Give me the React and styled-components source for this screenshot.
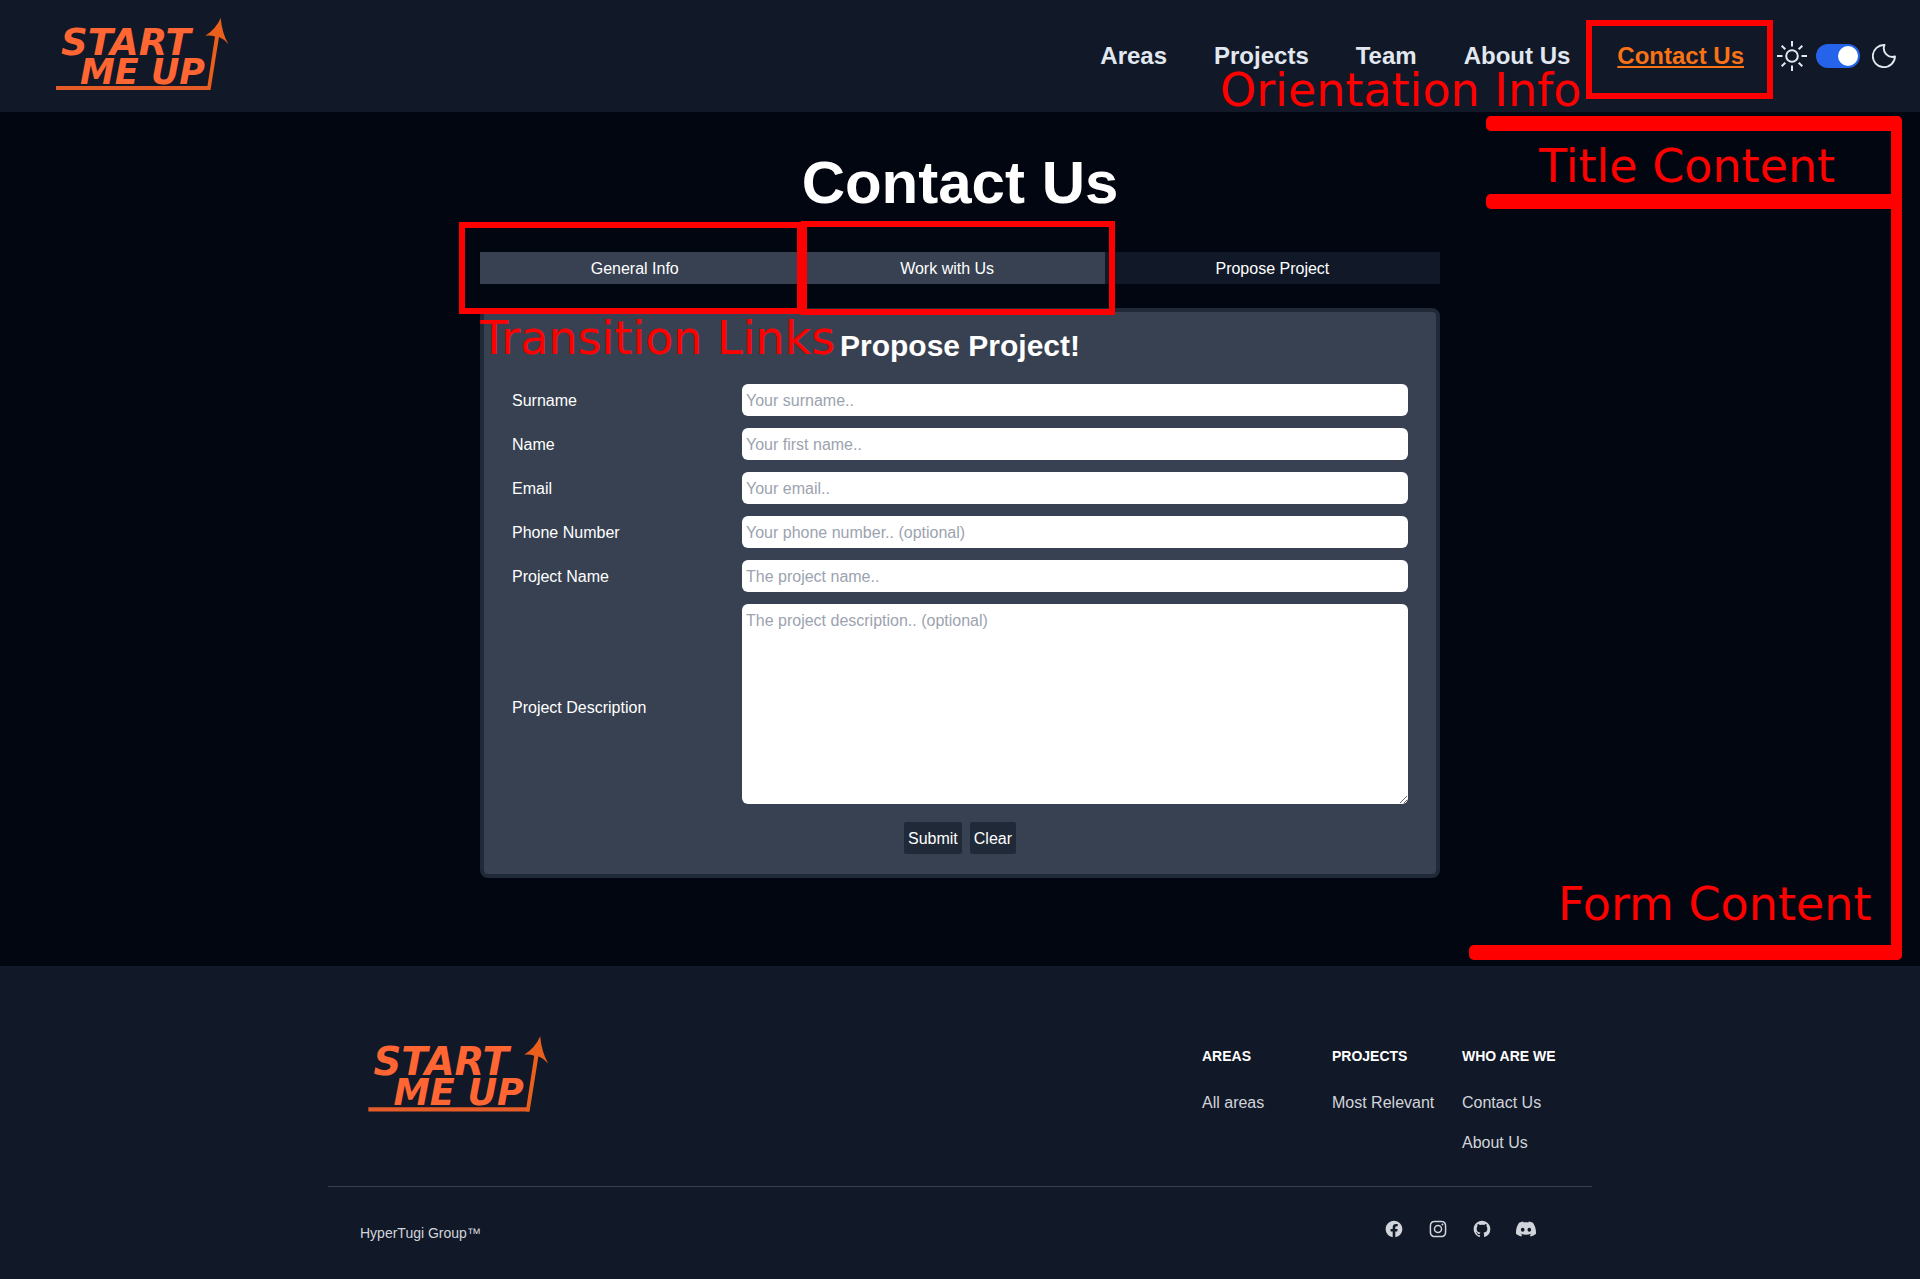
import React, { useState } from "react";
import styled, { createGlobalStyle } from "styled-components";
import { SiDiscord } from "react-icons/si";

const GlobalStyle = createGlobalStyle`
  *, *::before, *::after { box-sizing: border-box; }
  body {
    margin: 0;
    background: #020610;
    color: #ffffff;
    font-family: "Liberation Sans", Arial, sans-serif;
    font-size: 16px;
    line-height: 24px;
  }
  h1, h2, h3, p, ul { margin: 0; padding: 0; }
  ul { list-style: none; }
  a { color: inherit; text-decoration: none; }
  button, input, textarea { font: inherit; }
`;

const Page = styled.div`
  position: relative;
  min-height: 100vh;
  display: flex;
  flex-direction: column;
`;

const Header = styled.header`
  display: flex;
  align-items: center;
  justify-content: space-between;
  height: 112px;
  padding: 0 24px 0 48px;
  background: #111827;
`;

const HeaderRight = styled.div`
  display: flex;
  align-items: center;
  gap: 32px;
`;

const Nav = styled.nav`
  display: flex;
  gap: 47px;
`;

const NavLink = styled.a`
  color: ${(p) => (p.$active ? "#f97316" : "#e2e8f0")};
  font-size: 24px;
  font-weight: 700;
  line-height: 32px;
  text-decoration: ${(p) => (p.$active ? "underline" : "none")};
  text-decoration-thickness: 2px;
  text-underline-offset: 2px;
  text-decoration-skip-ink: none;
`;

const ThemeSwitch = styled.label`
  display: flex;
  align-items: center;
  color: #e2e8f0;
  cursor: pointer;

  svg { display: block; }
`;

const SwitchInput = styled.input`
  appearance: none;
  width: 44px;
  height: 24px;
  margin: 0 12px 0 8px;
  padding: 2px;
  border-radius: 12px;
  background: #2563eb;
  display: flex;
  justify-content: flex-start;
  cursor: pointer;

  &:checked { justify-content: flex-end; }

  &::before {
    content: "";
    width: 20px;
    height: 20px;
    border-radius: 50%;
    background: #ffffff;
  }
`;

const LogoLink = styled.a`
  display: block;

  svg { display: block; }
`;

const LogoText = styled.text`
  font-family: "DejaVu Sans", sans-serif;
  font-size: ${(p) => p.$size}px;
  font-weight: 700;
  font-style: italic;
  fill: #ff6633;
`;

const Main = styled.main`
  flex: 1;
  padding: 41px 0 88px;
`;

const Content = styled.div`
  width: 50%;
  min-width: 640px;
  margin: 0 auto;
`;

const Title = styled.h1`
  margin-bottom: 39px;
  font-size: 60px;
  line-height: 60px;
  text-align: center;
`;

const Tabs = styled.nav`
  display: flex;
  margin-bottom: 24px;
`;

const Tab = styled.a`
  flex: 1 1 auto;
  padding: 5px 0 3px;
  background: ${(p) => (p.$current ? "#111827" : "#374151")};
  text-align: center;
`;

const Form = styled.form`
  padding: 16px 28px 20px;
  border: 4px solid #1f2937;
  border-radius: 8px;
  background: #374151;
`;

const FormTitle = styled.h2`
  margin-bottom: 20px;
  font-size: 30px;
  line-height: 36px;
  text-align: center;
`;

const Field = styled.div`
  display: grid;
  grid-template-columns: 1fr 3fr;
  align-items: center;
  gap: 8px;
  margin-bottom: 12px;
`;

const FieldLabel = styled.label`
  padding-top: ${(p) => (p.$tall ? 8 : 2)}px;
`;

const TextInput = styled.input`
  display: block;
  width: 100%;
  height: 32px;
  padding: 5px 4px 3px;
  border: 0;
  border-radius: 6px;
  background: #ffffff;
  color: #111827;

  &::placeholder { color: #9ca3af; opacity: 1; }
`;

const TextArea = styled(TextInput)`
  height: 200px;
  resize: vertical;
`;

const Actions = styled.div`
  display: flex;
  justify-content: center;
  gap: 8px;
  padding-top: 6px;
`;

const Button = styled.button`
  padding: 5px 4px 3px;
  border: 0;
  border-radius: 2px;
  background: #1f2937;
  color: #ffffff;
  cursor: pointer;
`;

const Footer = styled.footer`
  background: #111827;
`;

const FooterInner = styled.div`
  max-width: 1264px;
  margin: 0 auto;
  padding-top: 63px;
`;

const FooterTop = styled.div`
  display: flex;
  justify-content: space-between;
  align-items: flex-start;
  padding: 0 32px 31px;
  border-bottom: 1px solid #374151;
`;

const FooterColumns = styled.div`
  display: grid;
  grid-template-columns: repeat(3, 98px);
  gap: 32px;
  padding-top: 17px;
`;

const ColumnTitle = styled.h3`
  margin-bottom: 25px;
  font-size: 14px;
  line-height: 20px;
  text-transform: uppercase;
  white-space: nowrap;
`;

const ColumnLinks = styled.ul`
  display: grid;
  gap: 16px;
  color: #d1d5db;
  white-space: nowrap;
`;

const FooterBottom = styled.div`
  display: flex;
  justify-content: space-between;
  align-items: flex-start;
  padding: 32px;
`;

const Copyright = styled.p`
  color: #d1d5db;
  font-size: 14px;
  line-height: 28px;
`;

const Socials = styled.div`
  display: flex;
  gap: 24px;
  padding-right: 24px;
  color: #d1d5db;

  svg { display: block; width: 20px; height: 20px; }
`;

const Note = styled.span`
  position: absolute;
  top: ${(p) => p.$top}px;
  left: ${(p) => p.$left}px;
  color: #ff0000;
  font-family: "DejaVu Sans", sans-serif;
  font-size: 46px;
  line-height: 44px;
  white-space: nowrap;
  pointer-events: none;
`;

const Frame = styled.div`
  position: absolute;
  top: ${(p) => p.$top}px;
  left: ${(p) => p.$left}px;
  width: ${(p) => p.$width}px;
  height: ${(p) => p.$height}px;
  border: 6px solid #ff0000;
  pointer-events: none;
`;

const Stroke = styled.div`
  position: absolute;
  top: ${(p) => p.$top}px;
  left: ${(p) => p.$left}px;
  width: ${(p) => p.$width}px;
  height: ${(p) => p.$height}px;
  border-radius: 5px;
  background: #ff0000;
  pointer-events: none;
`;

function Logo({ width, height }) {
  return (
    <LogoLink href="#home" aria-label="Start Me Up home">
      <svg width={width} height={height} viewBox="0 0 184 90">
        <LogoText $size={37} x="13" y="44">START</LogoText>
        <LogoText $size={35} x="32" y="73">ME UP</LogoText>
        <path d="M8 75H160L162.500 79H8Z" fill="#e65c28" />
        <path
          d="M159.300 76L167 25.500Q162 24 157.300 24.700Q168 18 172.700 7Q174 22 180.300 33Q176 28 171 26L162.500 79H159Z"
          fill="#ea5f1c"
        />
      </svg>
    </LogoLink>
  );
}

function SunIcon() {
  return (
    <svg width="32" height="32" viewBox="0 0 32 32" fill="none" stroke="currentColor" strokeWidth="2">
      <circle cx="16" cy="16" r="5.800" />
      <path d="M16 1v5.500M16 25.500V31M1 16h5.500M25.500 16H31M5.700 5.700l3.600 3.600M22.700 22.700l3.600 3.600M5.700 26.300l3.600-3.600M22.700 9.300l3.600-3.600" />
    </svg>
  );
}

function MoonIcon() {
  return (
    <svg width="24" height="24" viewBox="0 0 24 24" fill="none" stroke="currentColor" strokeWidth="1.9" strokeLinejoin="round">
      <path d="M12.500 1A11.100 11.100 0 1 0 23 12.500A8.600 8.600 0 0 1 12.500 1Z" />
    </svg>
  );
}

function FacebookIcon() {
  return (
    <svg viewBox="0 0 24 24" fill="currentColor">
      <path d="M22 12c0-5.523-4.477-10-10-10S2 6.477 2 12c0 4.991 3.657 9.128 8.438 9.878v-6.987h-2.540V12h2.540V9.797c0-2.506 1.492-3.890 3.777-3.890 1.094 0 2.238.195 2.238.195v2.460h-1.260c-1.243 0-1.630.771-1.630 1.562V12h2.773l-.443 2.890h-2.330v6.988C18.343 21.128 22 16.991 22 12z" />
    </svg>
  );
}

function InstagramIcon() {
  return (
    <svg viewBox="0 0 24 24" fill="currentColor" fillRule="evenodd">
      <path d="M12.315 2c2.430 0 2.784.013 3.808.060 1.064.049 1.791.218 2.427.465a4.902 4.902 0 011.772 1.153 4.902 4.902 0 011.153 1.772c.247.636.416 1.363.465 2.427.048 1.067.060 1.407.060 4.123v.080c0 2.643-.012 2.987-.060 4.043-.049 1.064-.218 1.791-.465 2.427a4.902 4.902 0 01-1.153 1.772 4.902 4.902 0 01-1.772 1.153c-.636.247-1.363.416-2.427.465-1.067.048-1.407.060-4.123.060h-.080c-2.643 0-2.987-.012-4.043-.060-1.064-.049-1.791-.218-2.427-.465a4.902 4.902 0 01-1.772-1.153 4.902 4.902 0 01-1.153-1.772c-.247-.636-.416-1.363-.465-2.427-.047-1.024-.060-1.379-.060-3.808v-.630c0-2.430.013-2.784.060-3.808.049-1.064.218-1.791.465-2.427a4.902 4.902 0 011.153-1.772A4.902 4.902 0 015.450 2.525c.636-.247 1.363-.416 2.427-.465C8.901 2.013 9.256 2 11.685 2h.630zm-.081 1.802h-.468c-2.456 0-2.784.011-3.807.058-.975.045-1.504.207-1.857.344-.467.182-.8.398-1.150.748-.350.350-.566.683-.748 1.150-.137.353-.300.882-.344 1.857-.047 1.023-.058 1.351-.058 3.807v.468c0 2.456.011 2.784.058 3.807.045.975.207 1.504.344 1.857.182.466.399.800.748 1.150.350.350.683.566 1.150.748.353.137.882.300 1.857.344 1.054.048 1.370.058 4.041.058h.080c2.597 0 2.917-.010 3.960-.058.976-.045 1.505-.207 1.858-.344.466-.182.800-.398 1.150-.748.350-.350.566-.683.748-1.150.137-.353.300-.882.344-1.857.048-1.055.058-1.370.058-4.041v-.080c0-2.597-.010-2.917-.058-3.960-.045-.976-.207-1.505-.344-1.858a3.097 3.097 0 00-.748-1.150 3.098 3.098 0 00-1.150-.748c-.353-.137-.882-.300-1.857-.344-1.023-.047-1.351-.058-3.807-.058zM12 6.865a5.135 5.135 0 110 10.270 5.135 5.135 0 010-10.270zm0 1.802a3.333 3.333 0 100 6.666 3.333 3.333 0 000-6.666zm5.338-3.205a1.200 1.200 0 110 2.400 1.200 1.200 0 010-2.400z" />
    </svg>
  );
}

function GithubIcon() {
  return (
    <svg viewBox="0 0 24 24" fill="currentColor" fillRule="evenodd">
      <path d="M12 2C6.477 2 2 6.484 2 12.017c0 4.425 2.865 8.180 6.839 9.504.500.092.682-.217.682-.483 0-.237-.008-.868-.013-1.703-2.782.605-3.369-1.343-3.369-1.343-.454-1.158-1.110-1.466-1.110-1.466-.908-.620.069-.608.069-.608 1.003.070 1.531 1.032 1.531 1.032.892 1.530 2.341 1.088 2.910.832.092-.647.350-1.088.636-1.338-2.220-.253-4.555-1.113-4.555-4.951 0-1.093.390-1.988 1.029-2.688-.103-.253-.446-1.272.098-2.650 0 0 .840-.270 2.750 1.026A9.564 9.564 0 0112 6.844c.850.004 1.705.115 2.504.337 1.909-1.296 2.747-1.027 2.747-1.027.546 1.379.202 2.398.100 2.651.640.700 1.028 1.595 1.028 2.688 0 3.848-2.339 4.695-4.566 4.943.359.309.678.920.678 1.855 0 1.338-.012 2.419-.012 2.747 0 .268.180.580.688.482A10.019 10.019 0 0022 12.017C22 6.484 17.522 2 12 2z" />
    </svg>
  );
}

const navItems = ["Areas", "Projects", "Team", "About Us", "Contact Us"];
const tabs = ["General Info", "Work with Us", "Propose Project"];
const fields = [
  { id: "surname", label: "Surname", hint: "Your surname..", type: "text" },
  { id: "name", label: "Name", hint: "Your first name..", type: "text" },
  { id: "email", label: "Email", hint: "Your email..", type: "email" },
  { id: "phone", label: "Phone Number", hint: "Your phone number.. (optional)", type: "tel" },
  { id: "project", label: "Project Name", hint: "The project name..", type: "text" },
];
const columns = [
  { title: "Areas", links: ["All areas"] },
  { title: "Projects", links: ["Most Relevant"] },
  { title: "Who are we", links: ["Contact Us", "About Us"] },
];
const socials = [
  { name: "Facebook", Icon: FacebookIcon },
  { name: "Instagram", Icon: InstagramIcon },
  { name: "GitHub", Icon: GithubIcon },
  { name: "Discord", Icon: SiDiscord },
];

export default function App() {
  const [dark, setDark] = useState(true);

  return (
    <Page>
      <GlobalStyle />
      <Header>
        <Logo width={184} height={90} />
        <HeaderRight>
          <Nav aria-label="Main">
            {navItems.map((item) => (
              <NavLink key={item} href="#" $active={item === "Contact Us"}>{item}</NavLink>
            ))}
          </Nav>
          <ThemeSwitch>
            <SunIcon />
            <SwitchInput
              type="checkbox"
              role="switch"
              aria-label="Dark theme"
              checked={dark}
              onChange={(e) => setDark(e.target.checked)}
            />
            <MoonIcon />
          </ThemeSwitch>
        </HeaderRight>
      </Header>

      <Main>
        <Content>
          <Title>Contact Us</Title>
          <Tabs aria-label="Contact sections">
            {tabs.map((tab) => (
              <Tab key={tab} href="#" $current={tab === "Propose Project"}>{tab}</Tab>
            ))}
          </Tabs>
          <Form onSubmit={(e) => e.preventDefault()}>
            <FormTitle>Propose Project!</FormTitle>
            {fields.map((f) => (
              <Field key={f.id}>
                <FieldLabel htmlFor={f.id}>{f.label}</FieldLabel>
                <TextInput id={f.id} type={f.type} placeholder={f.hint} />
              </Field>
            ))}
            <Field>
              <FieldLabel htmlFor="description" $tall>Project Description</FieldLabel>
              <TextArea as="textarea" id="description" placeholder="The project description.. (optional)" />
            </Field>
            <Actions>
              <Button type="submit">Submit</Button>
              <Button type="reset">Clear</Button>
            </Actions>
          </Form>
        </Content>
      </Main>

      <Footer>
        <FooterInner>
          <FooterTop>
            <Logo width={192} height={94} />
            <FooterColumns>
              {columns.map((c) => (
                <div key={c.title}>
                  <ColumnTitle>{c.title}</ColumnTitle>
                  <ColumnLinks>
                    {c.links.map((l) => (
                      <li key={l}><a href="#">{l}</a></li>
                    ))}
                  </ColumnLinks>
                </div>
              ))}
            </FooterColumns>
          </FooterTop>
          <FooterBottom>
            <Copyright>HyperTugi Group™</Copyright>
            <Socials>
              {socials.map(({ name, Icon }) => (
                <a key={name} href="#" aria-label={name}><Icon /></a>
              ))}
            </Socials>
          </FooterBottom>
        </FooterInner>
      </Footer>

      <Frame $top={20} $left={1586} $width={187} $height={79} />
      <Frame $top={222} $left={459} $width={344} $height={92} />
      <Frame $top={221} $left={801} $width={314} $height={94} />
      <Stroke $top={116} $left={1486} $width={416} $height={15} />
      <Stroke $top={194} $left={1486} $width={416} $height={15} />
      <Stroke $top={945} $left={1469} $width={433} $height={15} />
      <Stroke $top={116} $left={1891} $width={11} $height={844} />
      <Note $top={68} $left={1220}>Orientation Info</Note>
      <Note $top={144} $left={1539}>Title Content</Note>
      <Note $top={316} $left={480}>Transition Links</Note>
      <Note $top={882} $left={1558}>Form Content</Note>
    </Page>
  );
}
